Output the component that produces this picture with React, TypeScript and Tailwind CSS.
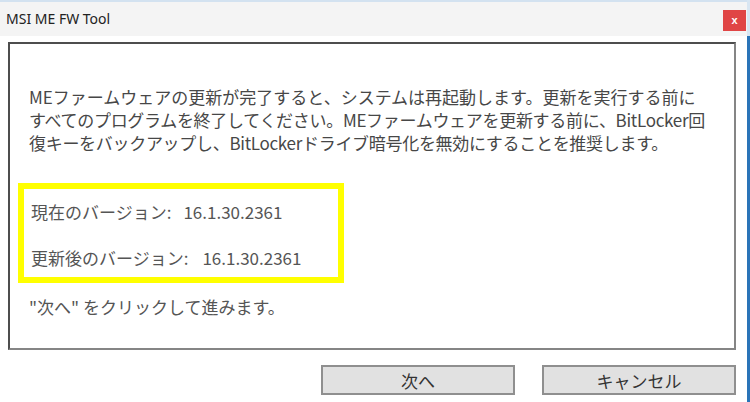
import React from "react";

const jp = { fontFamily: '"Noto Sans CJK JP", "Noto Sans", sans-serif' };

export default function App() {
  return (
    <div
      className="w-[750px] h-[402px] bg-white flex overflow-hidden text-[#474747]"
      style={jp}
    >
      <div className="flex-1 flex flex-col">
        {/* Title bar */}
        <div className="h-[36px] bg-[#f4f4f4] border-t-2 border-[#d3e2f0] flex items-center justify-between pl-[6px] pr-[1px]">
          <span
            className="text-[14px] text-[#222] leading-none"
            style={{ fontFamily: '"Noto Sans", sans-serif' }}
          >
            MSI ME FW Tool
          </span>
          <div className="w-[23px] h-[21px] bg-[#e04545] flex items-center justify-center mt-[2px]">
            <span className="text-white text-[11px] font-bold leading-none" style={{ fontFamily: '"Liberation Sans", sans-serif' }}>
              x
            </span>
          </div>
        </div>

        {/* Content */}
        <div className="flex-1 flex flex-col pl-[8px] pr-[11px] pt-[6px]">
          <div className="h-[308px] border-t-2 border-l-2 border-t-[#4d4d4d] border-l-[#4d4d4d] border-r-2 border-b-2 border-r-[#858585] border-b-[#858585] pl-[19px] pt-[41px]">
            <div className="text-[17px] leading-[23px] whitespace-nowrap">
              <div>MEファームウェアの更新が完了すると、システムは再起動します。更新を実行する前に</div>
              <div className="tracking-[-0.3px]">すべてのプログラムを終了してください。MEファームウェアを更新する前に、BitLocker回</div>
              <div className="tracking-[-0.3px]">復キーをバックアップし、BitLockerドライブ暗号化を無効にすることを推奨します。</div>
            </div>

            <div className="mt-[29px] -ml-[11px] w-[326px] h-[100px] border-[6px] border-[#ffff00] pl-[7px] pt-[11px] text-[17px] leading-[23px] text-[#555] whitespace-nowrap">
              <div className="flex">
                <span>現在のバージョン:</span>
                <span className="ml-[12px]">16.1.30.2361</span>
              </div>
              <div className="flex mt-[23px]">
                <span>更新後のバージョン:</span>
                <span className="ml-[14px]">16.1.30.2361</span>
              </div>
            </div>

            <div className="mt-[12px] text-[17px] leading-[23px] text-[#555] whitespace-nowrap">
              "次へ" をクリックして進みます。
            </div>
          </div>

          {/* Buttons */}
          <div className="flex justify-end gap-[27px] mt-[15px] pr-[0px]">
            <button className="w-[194px] h-[30px] bg-[#e1e1e1] border-2 border-[#8f8f8f] text-[17px] text-[#333] leading-none flex items-center justify-center">
              次へ
            </button>
            <button className="w-[194px] h-[30px] bg-[#e1e1e1] border-2 border-[#8f8f8f] text-[17px] text-[#333] leading-none flex items-center justify-center">
              キャンセル
            </button>
          </div>
        </div>
      </div>
      {/* Right window border */}
      <div className="w-[3px] flex flex-col">
        <div className="h-[36px] bg-[#d8e6f2]" />
        <div className="flex-1 bg-[#2a74b8]" />
      </div>
    </div>
  );
}
